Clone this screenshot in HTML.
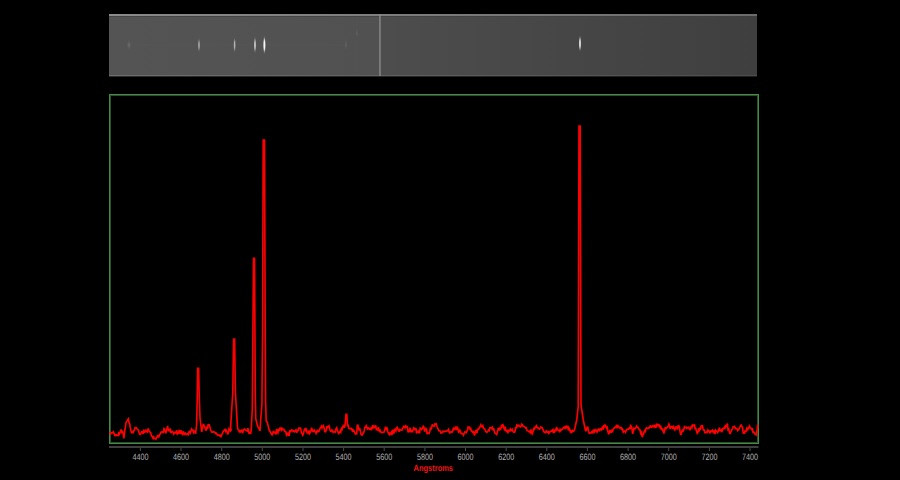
<!DOCTYPE html>
<html><head><meta charset="utf-8">
<style>
html,body{margin:0;padding:0;background:#000;width:900px;height:480px;overflow:hidden;}
svg{display:block;}
text{font-family:"Liberation Sans",sans-serif;text-rendering:geometricPrecision;}
</style></head><body>
<svg width="900" height="480" viewBox="0 0 900 480">
<defs>
<linearGradient id="bg" x1="0" y1="0" x2="1" y2="0">
<stop offset="0" stop-color="#545454"/>
<stop offset="0.42" stop-color="#515151"/>
<stop offset="0.42" stop-color="#4d4d4d"/>
<stop offset="1" stop-color="#3f3f3f"/>
</linearGradient>
<linearGradient id="tb" x1="0" y1="0" x2="1" y2="0"><stop offset="0" stop-color="#8a8a8a"/><stop offset="1" stop-color="#6c6c6c"/></linearGradient>
<linearGradient id="bb" x1="0" y1="0" x2="1" y2="0"><stop offset="0" stop-color="#6e6e6e"/><stop offset="1" stop-color="#4c4c4c"/></linearGradient>
<filter id="bl" x="-3" y="-3" width="7" height="7"><feGaussianBlur stdDeviation="0.6 1.4"/></filter>
</defs>
<rect width="900" height="480" fill="#000"/>
<!-- 2D spectrum strip -->
<rect x="109" y="14" width="648" height="62" fill="url(#bg)"/>
<rect x="109" y="14" width="648" height="2" fill="url(#tb)"/>
<rect x="109" y="16" width="648" height="1" fill="#3e3e3e" opacity="0.7"/>
<rect x="109" y="75" width="648" height="1.4" fill="url(#bb)"/>
<rect x="131" y="16" width="4" height="59" fill="#5e5e5e" opacity="0.12"/>
<rect x="379.3" y="14" width="1.3" height="62" fill="#8e8e8e"/>
<rect x="129" y="44.6" width="217" height="0.8" fill="#646464" opacity="0.25"/>
<rect x="356.5" y="16" width="0.8" height="59" fill="#666" opacity="0.18"/>
<g filter="url(#bl)">
<ellipse cx="129" cy="45" rx="1.6" ry="2.2" fill="#6a6a6a"/>
<ellipse cx="357" cy="33.5" rx="0.8" ry="0.8" fill="#7a7a7a"/>
<ellipse cx="346" cy="44.5" rx="0.6" ry="3" fill="#6a6a6a"/>
<ellipse cx="199" cy="45" rx="0.9" ry="4.5" fill="#a4a4a4"/>
<ellipse cx="234.6" cy="45" rx="0.8" ry="5" fill="#b4b4b4"/>
<ellipse cx="255" cy="45" rx="0.9" ry="5.8" fill="#cbcbcb"/>
<ellipse cx="264.4" cy="45" rx="1.0" ry="6.5" fill="#f6f6f6"/>
<ellipse cx="580" cy="43.5" rx="0.9" ry="5.5" fill="#e6e6e6"/>
</g>
<!-- plot frame -->
<g fill="#2a522a">
<rect x="110" y="95" width="647" height="1"/>
<rect x="110" y="442" width="647" height="1"/>
<rect x="110" y="95" width="1" height="348"/>
<rect x="757" y="95" width="1" height="348"/>
</g>
<g fill="#478a47">
<rect x="109" y="94" width="650" height="1"/>
<rect x="109" y="443" width="650" height="1"/>
<rect x="109" y="94" width="1" height="350"/>
<rect x="758" y="94" width="1" height="350"/>
</g>
<!-- spectrum -->
<polyline points="109.4,433.3 110.1,432.9 110.8,433.8 111.4,432.7 112.1,432.5 112.8,432.8 113.4,431.9 114.0,433.1 114.6,435.1 115.2,434.6 115.9,435.6 116.5,434.9 117.1,435.4 117.7,435.4 118.3,435.5 119.0,431.8 119.7,433.6 120.4,431.6 121.1,429.4 121.8,432.3 122.5,431.7 123.2,433.8 123.9,438.3 124.6,431.8 125.4,427.0 126.1,422.2 126.8,421.5 127.6,419.9 128.3,418.9 129.0,422.5 129.7,423.8 130.3,427.9 131.0,430.9 131.7,433.3 132.4,431.3 133.0,433.3 133.7,430.7 134.3,430.5 135.0,427.8 135.7,427.4 136.3,427.7 137.0,428.7 137.6,429.4 138.3,430.0 139.4,433.9 140.0,434.5 140.6,433.7 141.2,432.6 141.8,431.6 142.4,432.0 143.1,434.0 143.7,431.1 144.3,432.2 144.9,432.2 145.5,429.4 146.1,431.1 146.8,431.2 147.4,432.8 148.1,428.5 148.7,430.7 149.4,431.1 150.1,432.3 150.8,432.7 151.4,435.8 152.1,436.4 152.8,437.8 153.4,435.8 154.0,438.6 154.6,438.3 155.2,438.5 155.9,439.1 156.5,437.5 157.1,437.1 157.7,435.1 158.3,436.7 158.9,436.8 159.6,434.5 160.2,434.0 160.9,432.2 161.5,431.9 162.2,431.7 162.8,431.7 163.4,433.2 164.0,428.7 164.6,429.2 165.2,431.3 165.9,432.6 166.5,431.3 167.1,427.9 167.7,426.9 168.3,430.0 168.9,430.7 169.5,429.4 170.1,429.1 170.7,432.1 171.3,432.4 172.0,431.4 172.6,431.7 173.2,432.2 173.8,433.9 174.4,432.8 175.0,432.2 175.6,432.9 176.2,433.0 176.8,430.3 177.4,434.1 178.0,433.7 178.6,433.2 179.2,430.0 179.8,431.7 180.4,433.7 181.0,430.3 181.6,432.5 182.2,434.1 182.8,432.8 183.4,431.3 184.1,435.2 184.7,434.0 185.3,433.2 185.9,434.0 186.6,434.6 187.2,433.9 187.8,433.6 188.4,434.4 189.1,431.5 189.7,431.4 190.3,432.8 190.9,430.9 191.6,429.3 192.2,431.1 192.8,429.4 193.5,432.4 194.2,431.1 194.9,431.0 195.6,433.9 196.6,425.0 197.3,395.0 197.6,368.3 198.6,368.3 199.2,395.0 200.0,418.0 201.7,432.0 202.5,427.8 203.3,423.9 204.1,425.5 204.8,427.2 205.6,429.4 206.2,430.5 206.9,426.6 207.5,428.8 208.1,424.8 208.8,424.7 209.4,425.0 210.6,430.0 211.2,431.1 211.9,432.1 212.5,432.1 213.1,431.7 213.7,431.8 214.4,432.1 215.0,432.2 215.7,433.5 216.3,433.1 217.0,434.2 217.6,435.2 218.3,435.0 219.0,434.9 219.7,435.8 220.3,435.4 221.0,437.1 221.7,434.4 222.4,433.8 223.0,431.8 223.7,430.9 224.3,430.4 225.0,429.4 225.7,431.3 226.3,430.3 227.0,431.9 227.6,434.5 228.3,432.8 229.0,428.8 229.7,429.9 230.4,431.0 231.1,430.0 230.6,427.5 232.8,392.0 233.6,339.0 234.6,339.0 235.4,392.0 237.5,427.8 238.1,429.6 238.8,430.7 239.4,431.7 240.0,430.8 240.7,431.9 241.3,431.1 242.0,429.7 242.6,433.2 243.3,430.2 243.9,429.4 244.6,429.0 245.2,430.0 245.9,430.1 246.5,430.7 247.2,431.1 247.9,428.1 248.6,431.6 249.2,434.1 249.9,431.8 250.6,433.9 251.2,430.0 252.3,409.0 253.5,258.4 254.5,258.4 255.3,396.0 255.8,418.8 257.5,426.0 259.4,429.4 260.0,431.0 260.6,421.0 261.9,405.0 262.6,330.0 263.2,140.0 264.5,140.0 265.2,330.0 265.6,401.0 266.2,421.0 267.2,422.2 269.4,431.0 270.1,431.4 270.8,433.2 271.4,433.5 272.1,434.8 272.8,433.3 273.4,430.9 274.1,432.5 274.7,432.4 275.3,433.5 275.9,433.9 276.6,428.9 277.2,432.2 277.9,433.0 278.5,429.0 279.1,431.1 279.8,427.7 280.5,429.2 281.1,428.3 281.8,430.1 282.5,428.7 283.2,429.4 283.9,429.4 284.6,431.3 285.2,431.4 285.9,432.0 286.5,435.0 287.2,433.9 287.8,434.7 288.5,432.4 289.1,435.8 289.8,430.2 290.4,432.3 291.1,430.2 291.7,430.0 292.4,430.4 293.0,431.4 293.7,430.9 294.3,431.7 295.0,431.1 295.9,430.0 296.7,432.8 297.4,429.7 298.0,431.3 298.7,428.2 299.4,428.3 300.0,428.0 300.7,428.4 301.4,433.0 302.0,433.3 302.6,435.3 303.3,434.4 304.4,429.4 305.1,428.7 305.8,430.5 306.4,429.6 307.1,432.6 307.8,432.2 308.4,434.0 309.1,430.4 309.7,433.3 310.3,432.2 310.9,430.4 311.6,427.8 312.2,430.0 312.8,432.1 313.5,430.4 314.1,429.9 314.8,431.5 315.4,431.7 316.1,433.4 316.7,431.7 317.4,429.7 318.0,431.8 318.7,431.6 319.3,430.9 320.0,428.3 320.7,427.5 321.3,426.3 322.0,428.0 322.6,426.3 323.3,425.6 324.1,427.8 324.8,431.5 325.6,431.7 326.3,430.1 327.0,426.2 327.6,427.4 328.3,426.7 329.1,425.9 330.0,430.0 330.6,431.3 331.3,430.9 331.9,429.9 332.5,431.0 333.1,432.3 333.8,431.6 334.4,431.7 335.2,432.1 335.9,429.0 336.7,427.8 337.4,430.4 338.0,432.2 338.7,433.6 339.4,432.8 340.1,431.0 340.8,432.0 341.5,427.4 342.2,428.9 342.9,426.7 343.6,424.7 344.3,427.8 345.0,425.6 346.0,414.4 346.8,414.4 347.5,425.6 348.2,425.3 348.9,428.3 349.5,428.5 350.2,428.5 350.8,429.0 351.4,428.5 352.0,429.8 352.7,432.1 353.3,430.0 354.0,430.9 354.7,432.5 355.3,433.9 356.0,433.3 356.7,434.4 357.2,425.6 357.8,425.1 358.4,427.2 359.1,430.5 359.7,428.2 360.3,430.7 360.9,434.0 361.6,434.9 362.2,435.0 362.9,433.4 363.6,432.9 364.2,430.5 364.9,427.2 365.6,427.2 366.2,425.6 366.9,427.2 367.5,429.6 368.1,428.1 368.7,428.0 369.4,428.6 370.0,430.0 370.6,427.7 371.2,429.1 371.9,427.4 372.5,429.1 373.1,425.2 373.8,428.3 374.4,426.7 375.0,427.2 375.7,425.4 376.4,429.5 377.1,428.9 377.8,430.0 378.4,427.3 379.0,429.4 379.6,431.1 380.2,430.4 380.9,432.2 381.5,432.4 382.1,432.6 382.7,432.4 383.3,432.2 384.1,432.1 384.8,429.4 385.6,426.7 386.3,429.0 387.1,427.3 387.8,431.7 388.5,433.4 389.2,434.5 389.9,433.0 390.6,433.9 391.3,432.6 391.9,435.1 392.6,429.6 393.2,431.8 393.9,433.7 394.6,428.7 395.2,430.1 395.9,431.0 396.5,427.7 397.2,427.2 397.9,429.2 398.7,431.0 399.4,431.1 400.0,429.4 400.6,430.0 401.3,430.0 401.9,430.2 402.5,428.6 403.1,427.8 403.7,426.3 404.4,426.6 405.0,427.8 405.6,426.1 406.2,426.9 406.9,426.4 407.5,427.1 408.1,432.4 408.7,431.1 409.4,431.1 410.0,427.6 410.6,431.7 411.3,431.7 411.9,430.8 412.6,431.5 413.2,429.1 413.9,427.8 414.6,428.6 415.2,430.2 415.9,427.9 416.5,432.7 417.2,432.2 417.8,432.2 418.4,430.4 419.0,432.6 419.6,432.7 420.2,428.1 420.9,428.6 421.5,429.4 422.1,428.8 422.7,427.6 423.3,426.4 423.9,427.2 424.5,430.9 425.2,430.4 425.9,428.4 426.5,429.2 427.1,434.1 427.8,432.8 428.4,433.3 429.1,433.5 429.8,431.4 430.4,428.3 431.1,429.0 431.7,427.8 432.3,424.4 433.0,425.7 433.6,426.1 434.2,426.3 434.8,424.1 435.5,424.3 436.1,423.9 436.8,426.3 437.6,428.1 438.3,429.4 439.0,430.9 439.7,431.0 440.3,431.0 441.0,433.1 441.7,432.8 442.3,432.6 442.9,431.2 443.5,431.3 444.1,431.8 444.8,431.4 445.4,431.5 446.0,431.1 446.6,431.1 447.2,430.6 447.8,430.7 448.5,429.4 449.1,431.8 449.8,432.9 450.4,432.3 451.1,431.7 451.7,432.2 452.4,432.0 453.0,429.4 453.7,427.4 454.3,429.2 455.0,428.3 455.6,427.5 456.2,430.1 456.8,428.2 457.4,426.6 458.0,429.1 458.6,432.9 459.2,430.8 459.8,430.0 460.4,431.2 461.0,433.3 461.6,433.7 462.2,433.7 462.8,433.9 463.5,435.2 464.1,433.5 464.8,431.9 465.4,432.0 466.1,432.7 466.8,431.1 467.4,430.5 468.1,427.1 468.7,427.7 469.4,427.2 470.0,428.9 470.7,428.4 471.3,431.0 472.0,431.2 472.6,432.4 473.3,431.7 473.9,432.8 474.5,435.5 475.1,433.2 475.7,430.7 476.3,430.4 477.0,433.1 477.6,428.6 478.2,429.6 478.8,429.1 479.4,427.2 480.1,426.9 480.8,425.0 481.4,426.5 482.1,426.4 482.8,425.6 483.4,428.2 484.1,428.8 484.8,428.9 485.4,431.1 486.1,431.8 486.7,432.2 487.3,431.8 488.0,431.0 488.6,430.0 489.2,430.6 489.8,427.7 490.5,427.6 491.1,427.8 491.7,428.5 492.3,427.4 493.0,429.4 493.6,428.1 494.2,430.6 494.8,432.9 495.5,433.7 496.1,433.6 496.7,434.4 497.4,432.1 498.2,428.5 498.9,428.3 499.5,430.4 500.2,428.3 500.8,428.8 501.4,425.9 502.0,426.5 502.7,424.0 503.3,426.1 503.9,428.1 504.6,429.4 505.2,426.7 505.9,430.1 506.5,432.1 507.2,430.0 507.8,433.3 508.4,430.4 509.1,430.8 509.7,430.8 510.3,429.2 510.9,430.6 511.6,430.3 512.2,429.4 512.9,431.2 513.7,432.2 514.4,432.2 515.0,431.7 515.6,427.2 516.2,428.6 516.8,425.3 517.4,426.2 518.0,425.3 518.7,425.2 519.3,426.4 519.9,426.4 520.5,426.9 521.1,426.1 521.8,424.2 522.4,424.7 523.1,426.4 523.7,426.3 524.4,426.7 525.0,427.0 525.7,428.0 526.3,427.9 527.0,430.5 527.6,430.7 528.3,430.9 528.9,431.7 529.6,431.3 530.2,432.4 530.9,429.5 531.5,432.2 532.2,433.9 532.9,432.3 533.6,428.6 534.3,429.1 535.0,427.2 535.6,427.6 536.3,425.8 537.0,427.4 537.6,427.5 538.2,428.7 538.9,428.3 539.6,429.0 540.2,428.1 540.9,426.9 541.5,427.7 542.2,427.8 542.9,429.2 543.7,431.7 544.4,432.2 545.0,432.7 545.7,431.6 546.3,430.9 547.0,432.3 547.6,432.0 548.3,431.7 548.9,433.3 549.6,432.5 550.2,431.3 550.9,431.5 551.5,431.3 552.2,430.0 552.8,429.5 553.4,433.0 554.1,429.6 554.7,431.4 555.3,430.2 555.9,431.5 556.6,426.9 557.2,429.0 557.8,430.0 558.4,430.1 559.0,430.3 559.6,432.3 560.2,429.4 560.9,430.4 561.5,429.5 562.1,429.5 562.7,428.7 563.3,427.8 563.9,427.4 564.6,428.1 565.2,425.9 565.9,428.7 566.5,425.7 567.2,427.2 567.8,426.7 568.4,430.4 569.1,428.2 569.8,429.5 570.4,431.9 571.1,431.3 571.7,432.2 572.4,430.6 573.0,431.4 573.7,431.3 574.4,430.0 575.0,427.8 576.7,420.0 578.2,406.7 579.0,126.0 580.2,126.0 581.0,405.0 583.3,420.0 585.0,428.3 585.6,430.6 586.3,430.4 587.1,427.3 587.8,427.2 588.5,431.5 589.3,433.4 590.0,433.3 590.7,432.9 591.3,432.8 592.0,431.4 592.6,433.4 593.3,431.1 593.9,430.1 594.5,431.7 595.2,430.1 595.8,429.7 596.4,431.4 597.0,432.1 597.7,430.2 598.3,429.2 598.9,430.0 599.5,430.6 600.1,428.9 600.7,428.9 601.3,430.0 602.0,429.0 602.6,426.3 603.2,429.5 603.8,426.0 604.4,426.5 605.0,425.0 605.7,425.7 606.4,428.0 607.1,427.3 607.8,431.1 608.5,433.8 609.1,433.6 609.8,430.5 610.4,430.5 611.1,432.8 611.8,429.7 612.4,432.3 613.1,429.2 613.7,428.7 614.4,427.8 615.0,427.2 615.7,427.3 616.3,425.9 617.0,427.2 617.6,425.1 618.3,426.8 618.9,426.7 619.5,427.6 620.1,428.3 620.7,427.9 621.3,427.5 621.9,429.4 622.6,429.1 623.2,432.2 623.8,431.7 624.4,431.1 625.0,431.1 625.6,432.2 626.2,430.5 626.9,429.3 627.5,429.3 628.1,429.3 628.7,428.7 629.4,428.0 630.0,429.2 630.6,425.6 631.3,426.2 632.0,428.7 632.6,433.8 633.3,431.7 634.0,428.2 634.7,428.8 635.3,428.6 636.0,427.4 636.7,426.1 637.4,427.4 638.0,427.3 638.7,428.9 639.3,429.3 640.0,430.0 640.7,433.4 641.5,432.3 642.2,437.2 642.8,434.7 643.5,434.5 644.1,431.8 644.8,430.5 645.4,431.3 646.1,428.3 646.7,427.8 647.3,428.5 647.9,428.5 648.5,427.8 649.1,428.0 649.8,427.1 650.4,425.2 651.0,426.9 651.6,427.4 652.2,426.7 652.8,425.8 653.4,426.2 654.0,427.0 654.6,424.7 655.2,426.5 655.9,427.9 656.5,424.5 657.1,425.2 657.7,424.6 658.3,426.6 658.9,424.4 659.5,425.9 660.2,427.7 660.8,426.6 661.4,428.6 662.0,429.6 662.7,428.3 663.3,431.7 663.9,432.8 664.5,431.3 665.2,427.1 665.8,429.6 666.4,427.7 667.0,427.7 667.7,426.8 668.3,425.6 668.9,424.1 669.6,426.3 670.2,429.0 670.9,426.7 671.5,426.6 672.2,426.7 672.8,428.9 673.5,426.9 674.1,428.5 674.8,429.8 675.4,427.7 676.1,426.7 676.8,427.0 677.4,429.6 678.1,426.0 678.7,425.8 679.4,426.7 680.0,431.2 680.6,434.4 681.2,434.2 681.9,431.2 682.5,430.1 683.1,431.0 683.7,430.0 684.4,427.0 685.0,427.8 685.6,427.5 686.2,427.1 686.9,428.4 687.5,427.6 688.1,427.7 688.7,427.3 689.4,429.2 690.0,429.6 690.6,427.8 691.2,426.8 691.9,427.8 692.5,425.1 693.1,425.6 693.8,425.9 694.4,424.4 695.1,428.6 695.8,428.4 696.5,431.0 697.2,433.3 697.8,432.6 698.5,429.5 699.1,430.5 699.8,428.6 700.4,429.1 701.1,426.2 701.7,426.7 702.4,425.1 703.0,428.8 703.7,430.1 704.3,430.1 705.0,432.9 705.6,432.8 706.2,432.3 706.8,431.7 707.4,432.9 708.0,430.1 708.7,431.1 709.3,431.8 709.9,432.7 710.5,431.2 711.1,431.7 711.7,431.1 712.4,430.2 713.0,431.5 713.7,433.3 714.3,430.2 715.0,434.2 715.7,430.3 716.3,431.1 717.0,431.3 717.6,432.4 718.3,431.1 718.9,429.1 719.5,427.6 720.1,430.7 720.7,430.6 721.3,430.0 721.9,432.2 722.5,428.7 723.1,428.4 723.7,428.8 724.3,427.7 724.9,429.0 725.5,424.9 726.1,426.1 726.7,426.5 727.4,423.4 728.0,429.8 728.7,429.1 729.3,431.7 730.0,434.1 730.6,432.2 731.3,431.1 731.9,429.7 732.6,428.3 733.2,426.7 733.9,426.7 734.5,426.4 735.2,428.5 735.8,428.2 736.4,428.7 737.0,428.8 737.7,430.7 738.3,430.0 739.0,429.2 739.7,427.0 740.4,426.7 741.1,424.4 741.8,426.4 742.5,427.4 743.2,433.0 743.9,433.3 744.5,433.1 745.1,430.5 745.7,432.3 746.3,430.5 747.0,427.3 747.6,430.6 748.2,428.1 748.8,428.1 749.4,426.1 750.2,427.5 750.9,428.1 751.7,429.4 752.3,428.2 753.0,432.3 753.6,431.8 754.2,432.2 754.8,433.9 755.5,434.3 756.1,435.0 757.0,430.6 757.8,424.4" fill="none" stroke="#ff0000" stroke-width="1.65" stroke-linejoin="miter" stroke-miterlimit="3"/>
<!-- axis -->
<rect x="109" y="446" width="649.5" height="2" fill="#3e3e3e"/>
<g font-size="10" fill="#b4b4b4">
<line x1="140.4" y1="448" x2="140.4" y2="451" stroke="#4a4a4a" stroke-width="1"/>
<text transform="translate(140.4,459.9) scale(0.72,0.92)" text-anchor="middle">4400</text>
<line x1="181.0" y1="448" x2="181.0" y2="451" stroke="#4a4a4a" stroke-width="1"/>
<text transform="translate(181.0,459.9) scale(0.72,0.92)" text-anchor="middle">4600</text>
<line x1="221.7" y1="448" x2="221.7" y2="451" stroke="#4a4a4a" stroke-width="1"/>
<text transform="translate(221.7,459.9) scale(0.72,0.92)" text-anchor="middle">4800</text>
<line x1="262.3" y1="448" x2="262.3" y2="451" stroke="#4a4a4a" stroke-width="1"/>
<text transform="translate(262.3,459.9) scale(0.72,0.92)" text-anchor="middle">5000</text>
<line x1="303.0" y1="448" x2="303.0" y2="451" stroke="#4a4a4a" stroke-width="1"/>
<text transform="translate(303.0,459.9) scale(0.72,0.92)" text-anchor="middle">5200</text>
<line x1="343.6" y1="448" x2="343.6" y2="451" stroke="#4a4a4a" stroke-width="1"/>
<text transform="translate(343.6,459.9) scale(0.72,0.92)" text-anchor="middle">5400</text>
<line x1="384.2" y1="448" x2="384.2" y2="451" stroke="#4a4a4a" stroke-width="1"/>
<text transform="translate(384.2,459.9) scale(0.72,0.92)" text-anchor="middle">5600</text>
<line x1="424.9" y1="448" x2="424.9" y2="451" stroke="#4a4a4a" stroke-width="1"/>
<text transform="translate(424.9,459.9) scale(0.72,0.92)" text-anchor="middle">5800</text>
<line x1="465.5" y1="448" x2="465.5" y2="451" stroke="#4a4a4a" stroke-width="1"/>
<text transform="translate(465.5,459.9) scale(0.72,0.92)" text-anchor="middle">6000</text>
<line x1="506.2" y1="448" x2="506.2" y2="451" stroke="#4a4a4a" stroke-width="1"/>
<text transform="translate(506.2,459.9) scale(0.72,0.92)" text-anchor="middle">6200</text>
<line x1="546.8" y1="448" x2="546.8" y2="451" stroke="#4a4a4a" stroke-width="1"/>
<text transform="translate(546.8,459.9) scale(0.72,0.92)" text-anchor="middle">6400</text>
<line x1="587.4" y1="448" x2="587.4" y2="451" stroke="#4a4a4a" stroke-width="1"/>
<text transform="translate(587.4,459.9) scale(0.72,0.92)" text-anchor="middle">6600</text>
<line x1="628.1" y1="448" x2="628.1" y2="451" stroke="#4a4a4a" stroke-width="1"/>
<text transform="translate(628.1,459.9) scale(0.72,0.92)" text-anchor="middle">6800</text>
<line x1="668.7" y1="448" x2="668.7" y2="451" stroke="#4a4a4a" stroke-width="1"/>
<text transform="translate(668.7,459.9) scale(0.72,0.92)" text-anchor="middle">7000</text>
<line x1="709.4" y1="448" x2="709.4" y2="451" stroke="#4a4a4a" stroke-width="1"/>
<text transform="translate(709.4,459.9) scale(0.72,0.92)" text-anchor="middle">7200</text>
<line x1="750.0" y1="448" x2="750.0" y2="451" stroke="#4a4a4a" stroke-width="1"/>
<text transform="translate(750.0,459.9) scale(0.72,0.92)" text-anchor="middle">7400</text>

</g>
<text transform="translate(433.3,471) scale(0.83,1)" text-anchor="middle" font-size="9" font-weight="bold" fill="#f21414">Angstroms</text>
</svg>
</body></html>
